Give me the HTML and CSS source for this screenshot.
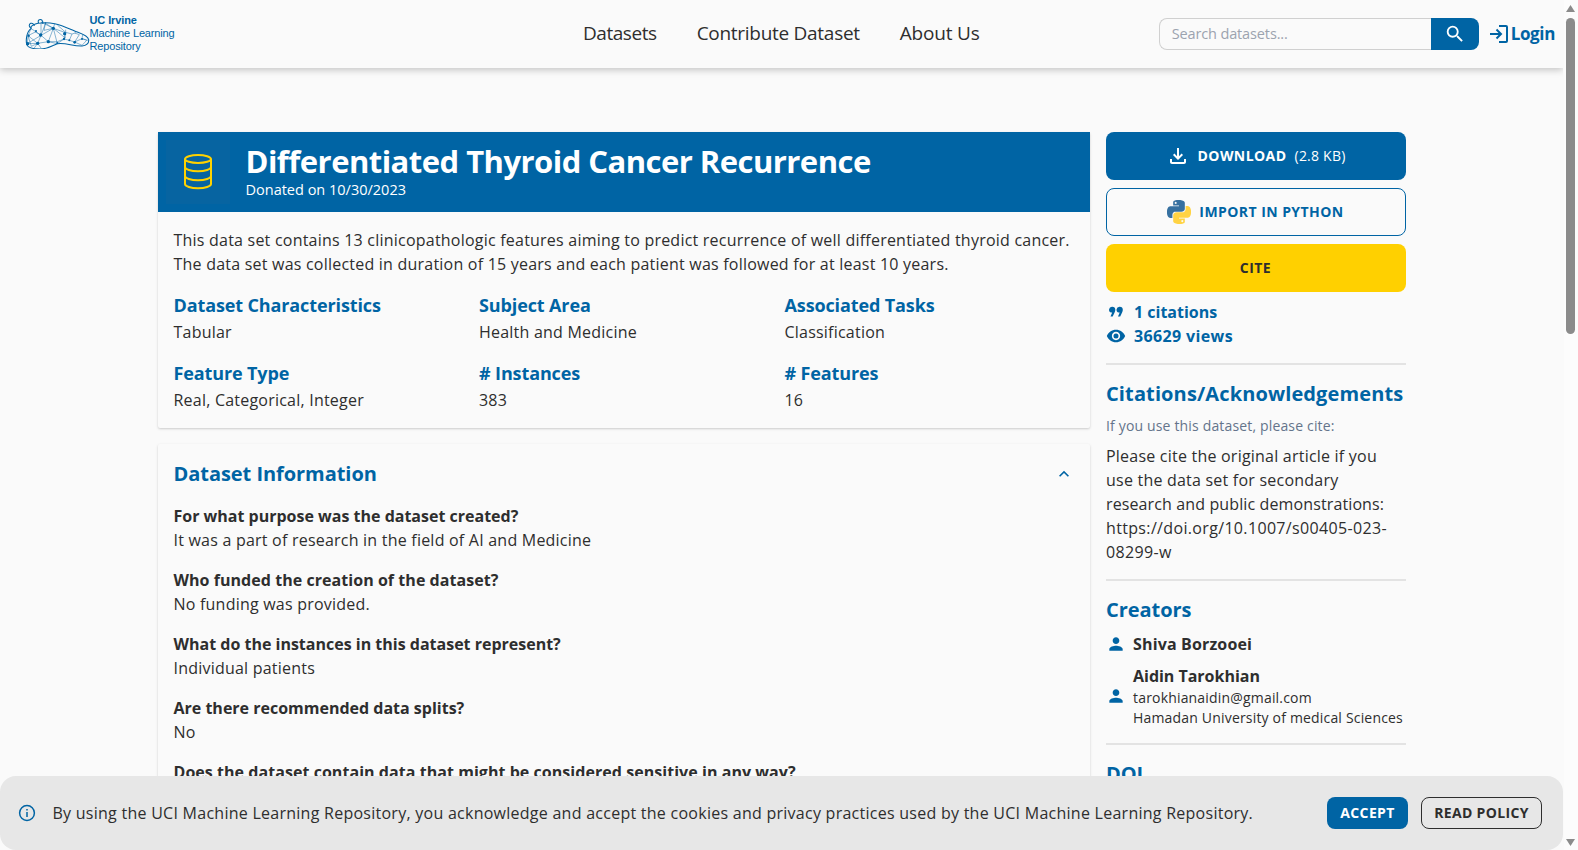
FILE: index.html
```html
<!DOCTYPE html>
<html lang="en">
<head>
<meta charset="utf-8">
<title>Differentiated Thyroid Cancer Recurrence - UCI Machine Learning Repository</title>
<link rel="stylesheet" href="styles.css">
</head>
<body>
<div class="page">
  <header class="header">
    <a class="logo">
      <svg class="logo-mark" width="66" height="32" viewBox="0 0 198 96" fill="none" stroke="#0064a4">
        <path stroke-width="3.2" d="M21 35C8 44 5 68 8 82c4 12 24 14 40 14 22 0 36-10 52-16 26-4 46 8 74 7 14-2 21-10 20-19-2-10-16-16-32-22-20-8-48-22-70-26-16-3-30-3-41-2-12 0-22 3-30 11z"/>
        <path stroke-width="3.2" d="M22 34c-8-4-8-12-2-15 6-2 10 3 11 8M44 18c-6-10 8-15 12-5v7"/>
        <path stroke-width="1.4" d="M12 56 21 35l15 9-24 12-2 24 31-1 10-24-18-11M36 44l15 11 0-40 37 19-37 21M41 79l32-5 15-40-25-16M51 55l22 19 27 6-12-46 34 12 2 17-36-29M65 15l-5 25 28-6M73 74l27 0 20-8-20 14M10 80l41-25M12 56l29 23 10 14M12 56l10 32 19-9M120 66l5-20 19 5-8 19 16 5 14-22-14-5M136 70l-16-4M152 75l22-10 2-12M152 75l22 10 14-15-14-5M41 79l-11 15M65 18l-14 37M100 24l25 22 0-8M92 20l-4 14M174 65l18 5M144 51l12-4"/>
        <g fill="#0064a4" stroke="none"><circle cx="11" cy="80" r="5"/><circle cx="14" cy="56" r="3.5"/><circle cx="41" cy="79" r="5"/><circle cx="50" cy="54" r="5"/><circle cx="73" cy="74" r="5"/><circle cx="88" cy="34" r="5"/><circle cx="122" cy="50" r="5"/><circle cx="120" cy="66" r="3.5"/><circle cx="152" cy="76" r="4"/><circle cx="136" cy="70" r="3"/><circle cx="174" cy="66" r="3"/><circle cx="36" cy="42" r="3"/><circle cx="100" cy="78" r="3"/></g>
      </svg>
      <span class="logo-text"><b>UC Irvine</b><span>Machine Learning</span><span>Repository</span></span>
    </a>
    <nav class="nav"><a class="n1">Datasets</a><a class="n2">Contribute Dataset</a><a class="n3">About Us</a></nav>
    <div class="tools">
      <div class="search"><div class="field">Search datasets...</div><button class="go"><svg width="22" height="22" viewBox="0 0 24 24"><path fill="#fff" d="M15.5 14h-.79l-.28-.27A6.47 6.47 0 0 0 16 9.500 6.500 6.500 0 1 0 9.500 16c1.610 0 3.090-.59 4.230-1.570l.27.28v.79l5 4.990L20.490 19l-4.990-5zm-6 0C7.010 14 5 11.990 5 9.500S7.010 5 9.500 5 14 7.010 14 9.500 11.990 14 9.500 14z"/></svg></button></div>
      <a class="login"><svg width="18" height="18" viewBox="0 0 18 18" fill="none" stroke="#0064a4" stroke-width="2"><path d="M0 9h11M6.500 4.500 11 9l-4.500 4.500M9 1h7q1 0 1 1v14q0 1-1 1H9"/></svg><span>Login</span></a>
    </div>
  </header>

  <div class="content">
    <main class="main">
      <section class="card">
        <div class="hero">
          <div class="hero-icon"><svg width="28" height="36" viewBox="0 0 28 36" fill="none" stroke="#ffd200" stroke-width="2"><ellipse cx="14" cy="5" rx="13" ry="4"/><path d="M1 5v25c0 2.300 5.800 4.200 13 4.200s13-1.900 13-4.200V5M1 13c0 2.300 5.800 4.200 13 4.200s13-1.900 13-4.200M1 22c0 2.300 5.800 4.200 13 4.200s13-1.900 13-4.200"/></svg></div>
          <div><h1>Differentiated Thyroid Cancer Recurrence</h1><p class="donated">Donated on 10/30/2023</p></div>
        </div>
        <div class="summary">
          <p>This data set contains 13 clinicopathologic features aiming to predict recurrence of well differentiated thyroid cancer.<br>The data set was collected in duration of 15 years and each patient was followed for at least 10 years.</p>
          <div class="facts">
            <div><h3>Dataset Characteristics</h3><p>Tabular</p></div>
            <div><h3>Subject Area</h3><p>Health and Medicine</p></div>
            <div><h3>Associated Tasks</h3><p>Classification</p></div>
            <div><h3>Feature Type</h3><p>Real, Categorical, Integer</p></div>
            <div><h3># Instances</h3><p>383</p></div>
            <div><h3># Features</h3><p>16</p></div>
          </div>
        </div>
      </section>
      <section class="card info">
        <div class="info-head"><h2>Dataset Information</h2><svg width="20" height="20" viewBox="0 0 24 24"><path fill="#0064a4" d="m12 8-6 6 1.410 1.410L12 10.830l4.590 4.580L18 14z"/></svg></div>
        <div class="qa"><b>For what purpose was the dataset created?</b><p>It was a part of research in the field of AI and Medicine</p></div>
        <div class="qa"><b class="wide">Who funded the creation of the dataset?</b><p>No funding was provided.</p></div>
        <div class="qa"><b>What do the instances in this dataset represent?</b><p>Individual patients</p></div>
        <div class="qa"><b>Are there recommended data splits?</b><p>No</p></div>
        <div class="qa"><b class="wide">Does the dataset contain data that might be considered sensitive in any way?</b></div>
      </section>
    </main>

    <aside class="side">
      <div class="actions">
        <button class="btn blue"><svg width="24" height="24" viewBox="0 0 24 24"><path fill="#fff" d="M18 15v3H6v-3H4v3c0 1.100.9 2 2 2h12c1.100 0 2-.9 2-2v-3h-2zm-1-4-1.410-1.410L13 12.170V4h-2v8.170L8.410 9.590 7 11l5 5 5-5z"/></svg><b>DOWNLOAD</b><span>(2.8 KB)</span></button>
        <button class="btn outline"><svg width="24" height="24" viewBox="0 0 24 24"><path fill="#3670a0" d="M14.25.18l.9.2.73.26.59.3.45.32.34.34.25.34.16.33.1.3.04.26.02.2-.01.13V8.5l-.05.63-.13.55-.21.46-.26.38-.3.31-.33.25-.35.19-.35.14-.33.1-.3.07-.26.04-.21.02H8.77l-.69.05-.59.14-.5.22-.41.27-.33.32-.27.35-.2.36-.15.37-.1.35-.07.32-.04.27-.02.21v3.06H3.17l-.21-.03-.28-.07-.32-.12-.35-.18-.36-.26-.36-.36-.35-.46-.32-.59-.28-.73-.21-.88-.14-1.05-.05-1.23.06-1.22.16-1.04.24-.87.32-.71.36-.57.4-.44.42-.33.42-.24.4-.16.36-.1.32-.05.24-.01h.16l.06.01h8.16v-.83H6.18l-.01-2.75-.02-.37.05-.34.11-.31.17-.28.25-.26.31-.23.38-.2.44-.18.51-.15.58-.12.64-.1.71-.06.77-.04.84-.02 1.270.05zm-6.3 1.980l-.23.33-.08.41.08.41.23.34.33.22.41.09.41-.09.33-.22.23-.34.08-.41-.08-.41-.23-.33-.33-.22-.41-.09-.41.09z"/><path fill="#ffd343" d="M21.04 6.110l.28.06.32.12.35.18.36.27.36.35.35.47.32.59.28.73.21.88.14 1.040.05 1.230-.06 1.230-.16 1.040-.24.86-.32.71-.36.57-.4.45-.42.33-.42.24-.4.16-.36.09-.32.05-.24.02-.16-.01h-8.220v.82h5.840l.01 2.760.02.36-.05.34-.11.31-.17.29-.25.25-.31.24-.38.2-.44.17-.51.15-.58.13-.64.09-.71.07-.77.04-.84.01-1.270-.04-1.070-.14-.9-.2-.73-.25-.59-.3-.45-.33-.34-.34-.25-.34-.16-.33-.1-.3-.04-.25-.02-.2.01-.13v-5.340l.05-.64.13-.54.21-.46.26-.38.3-.32.33-.24.35-.2.35-.14.33-.1.3-.06.26-.04.21-.02.13-.01h5.840l.69-.05.59-.14.5-.21.41-.28.33-.32.27-.35.2-.36.15-.36.1-.35.07-.32.04-.28.02-.21V6.070h2.090l.14.01zM14.570 20.360l-.23.33-.08.41.08.41.23.33.33.23.41.08.41-.08.33-.23.23-.33.08-.41-.08-.41-.23-.33-.33-.23-.41-.08-.41.08z"/></svg><b>IMPORT IN PYTHON</b></button>
        <button class="btn yellow"><b>CITE</b></button>
      </div>
      <div class="stats">
        <div><svg width="20" height="20" viewBox="0 0 20 20" fill="#0064a4"><path d="M6.200 4.700a3 3 0 0 0-.9 5.900h.9L4.500 14.500h2.200l2-4.200c.4-.8.6-1.600.6-2.500a3.100 3.100 0 0 0-3.100-3.100zM13.700 4.700a3 3 0 0 0-.9 5.900h.9L12 14.500h2.200l2-4.200c.4-.8.6-1.600.6-2.500a3.100 3.100 0 0 0-3.100-3.100z"/></svg><b>1 citations</b></div>
        <div><svg width="20" height="20" viewBox="0 0 24 24"><path fill="#0064a4" d="M12 4.500C7 4.500 2.730 7.610 1 12c1.730 4.390 6 7.500 11 7.500s9.270-3.110 11-7.500c-1.730-4.390-6-7.500-11-7.500zM12 17c-2.760 0-5-2.240-5-5s2.240-5 5-5 5 2.240 5 5-2.240 5-5 5zm0-8a3 3 0 1 0 0 6 3 3 0 0 0 0-6z"/></svg><b class="views">36629 views</b></div>
      </div>
      <hr>
      <h2 class="ack">Citations/Acknowledgements</h2>
      <p class="hint">If you use this dataset, please cite:</p>
      <p class="cite">Please cite the original article if you<br>use the data set for secondary<br><span class="tight">research and public demonstrations:</span><br><span class="url">https://doi.org/10.1007/s00405-023-<br>08299-w</span></p>
      <hr>
      <h2>Creators</h2>
      <div class="person"><svg width="20" height="20" viewBox="0 0 24 24"><path fill="#0064a4" d="M12 12c2.210 0 4-1.790 4-4s-1.790-4-4-4-4 1.790-4 4 1.790 4 4 4zm0 2c-2.670 0-8 1.340-8 4v2h16v-2c0-2.660-5.330-4-8-4z"/></svg><div><b>Shiva Borzooei</b></div></div>
      <div class="person"><svg width="20" height="20" viewBox="0 0 24 24"><path fill="#0064a4" d="M12 12c2.210 0 4-1.790 4-4s-1.790-4-4-4-4 1.790-4 4 1.790 4 4 4zm0 2c-2.670 0-8 1.340-8 4v2h16v-2c0-2.660-5.330-4-8-4z"/></svg><div><b class="aidin">Aidin Tarokhian</b><p>tarokhianaidin@gmail.com</p><p>Hamadan University of medical Sciences</p></div></div>
      <hr>
      <h2>DOI</h2>
    </aside>
  </div>
</div>

<div class="cookie">
  <svg width="20" height="20" viewBox="0 0 20 20" fill="none" stroke="#0064a4" stroke-width="1.500"><circle cx="10" cy="10" r="7.400"/><path d="M10 9v5M10 6v1.600"/></svg>
  <p>By using the UCI Machine Learning Repository, you acknowledge and accept the cookies and privacy practices used by the UCI Machine Learning Repository.</p>
  <button class="small accept">ACCEPT</button>
  <button class="small policy">READ POLICY</button>
</div>
<div class="scrollbar"><i class="up"></i><i class="thumb"></i><i class="down"></i></div>
</body>
</html>
```

FILE: styles.css
```css
* { box-sizing: border-box; margin: 0; padding: 0; }
html, body { height: 850px; overflow: hidden; }
body { background: #fafafa; color: #2e2e2e; font: 16px/24px "Open Sans", "Noto Sans", sans-serif; letter-spacing: .22px; }
button { font: inherit; border: 0; letter-spacing: inherit; color: inherit; background: none; }
b { font-weight: 700; letter-spacing: 0; }
svg { display: block; flex: none; }
.page { width: 1563px; height: 850px; overflow: hidden; }

.header { display: flex; align-items: center; height: 68px; padding: 0 8px 0 23.5px; box-shadow: 0 2px 7px rgba(0,0,0,.22); }
.logo { display: flex; align-items: flex-start; width: 559.5px; height: 41px; }
.logo-mark { margin-top: 3px; }
.logo-text { display: flex; flex-direction: column; font: 11px/13px "Liberation Sans", Arial, sans-serif; color: #0064a4; letter-spacing: -.15px; white-space: nowrap; }
.logo-text b { letter-spacing: -.1px; }
.nav { display: flex; gap: 40px; font-size: 19px; line-height: 28px; flex: 1; white-space: nowrap; padding-bottom: 2px; }
.n1 { letter-spacing: -.45px; }
.n2 { letter-spacing: -.28px; }
.n3 { letter-spacing: -.2px; }
.tools { display: flex; align-items: center; gap: 11px; }
.search { display: flex; height: 32px; }
.field { width: 272px; border: 1px solid #d0d0d0; border-right: 0; border-radius: 8px 0 0 8px; padding: 0 12px; font-size: 14.5px; line-height: 29px; letter-spacing: -.13px; color: #9ca3af; }
.go { display: flex; align-items: center; justify-content: center; width: 48px; background: #0064a4; border-radius: 0 8px 8px 0; }
.login { display: flex; align-items: center; gap: 3px; color: #0064a4; font-weight: 700; font-size: 17px; letter-spacing: -.35px; }

.content { display: flex; gap: 16px; padding: 64px 0 0 158px; }
.main { width: 932px; display: flex; flex-direction: column; gap: 16px; }
.card { box-shadow: 0 1px 3px rgba(0,0,0,.13), 0 1px 2px rgba(0,0,0,.07); border-radius: 2px; }
.hero { display: flex; height: 80px; background: #0064a4; color: #fff; }
.hero-icon { display: flex; align-items: center; justify-content: center; width: 64px; height: 64px; margin: 8px 15.5px 0 8px; background: #0764a1; }
h1 { font-size: 31px; line-height: 40px; letter-spacing: -.53px; margin-top: 9px; white-space: nowrap; }
.donated { font-size: 14.5px; line-height: 16px; letter-spacing: 0; margin-top: 1px; }
.summary { padding: 16px 16px 16px 15.5px; height: 216px; white-space: nowrap; }
.facts { display: grid; grid-template-columns: repeat(3, 1fr); gap: 16px; margin-top: 16px; }
h3 { font-size: 18px; line-height: 26px; padding-bottom: 2px; color: #0064a4; letter-spacing: -.12px; }
h2 { font-size: 20px; line-height: 28px; color: #0064a4; letter-spacing: -.05px; }
.info { padding: 16px 16px 16px 15.5px; }
.info-head { display: flex; justify-content: space-between; align-items: center; margin-bottom: 16px; }
.qa { margin-bottom: 16px; }
.wide { letter-spacing: .05px; }

.side { width: 300px; white-space: nowrap; }
.actions { display: flex; flex-direction: column; gap: 8px; }
.btn { display: flex; align-items: center; justify-content: center; gap: 8px; height: 48px; border-radius: 8px; font-size: 14px; padding-right: 1px; }
.btn b { letter-spacing: .44px; }
.blue { background: #0064a4; color: #fff; }
.outline { border: 1px solid #0064a4; color: #0064a4; }
.yellow { background: #ffd000; }
.stats { margin-top: 8px; color: #0064a4; }
.stats div { display: flex; align-items: center; gap: 8px; }
.views { letter-spacing: .36px; }
hr { border: 0; height: 2px; background: #e3e3e3; margin: 15px 0; }
.ack { letter-spacing: .12px; }
.hint { font-size: 14px; line-height: 20px; margin: 8px 0; color: #64748b; letter-spacing: .16px; }
.tight { letter-spacing: .12px; }
.url { letter-spacing: .34px; }
.person { display: flex; align-items: center; gap: 7px; margin-top: 8px; }
.person b { display: block; letter-spacing: .15px; }
.person .aidin { letter-spacing: -.02px; }
.person p { font-size: 14px; line-height: 20px; letter-spacing: .18px; }

.cookie { position: fixed; left: 0; bottom: 0; width: 1563px; height: 74px; display: flex; align-items: center; padding: 0 21px 0 16.500px; border-radius: 16px; background: #e7e7e7; white-space: nowrap; }
.cookie p { flex: 1; margin-left: 16px; letter-spacing: .26px; }
.small { height: 32px; border-radius: 8px; font-size: 14px; font-weight: 700; letter-spacing: .35px; }
.accept { width: 81px; background: #0064a4; color: #fff; }
.policy { width: 121px; margin-left: 13px; border: 1px solid #2e2e2e; background: none; }

.scrollbar { position: fixed; top: 0; right: 0; width: 14px; height: 850px; background: #fcfcfc; }
.scrollbar i { position: absolute; left: 2px; width: 9px; }
.thumb { top: 18px; height: 316px; border-radius: 5px; background: #8b8b8b; }
.up { top: 5px; height: 7px; background: #8b8b8b; clip-path: polygon(50% 0, 100% 100%, 0 100%); }
.down { bottom: 4px; height: 7px; background: #8b8b8b; clip-path: polygon(0 0, 100% 0, 50% 100%); }
```
